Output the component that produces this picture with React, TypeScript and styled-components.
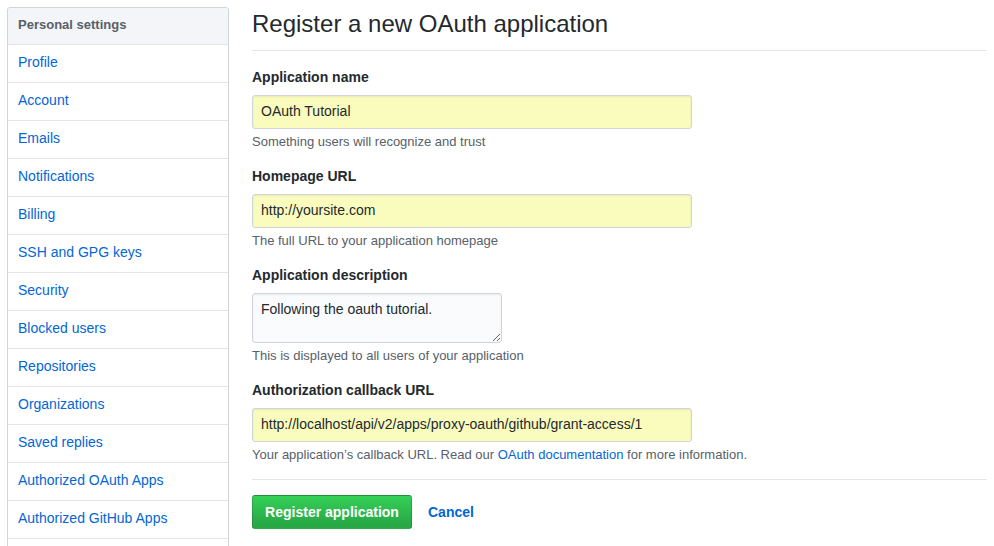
import React from 'react'
import styled, { createGlobalStyle } from 'styled-components'

const GlobalStyle = createGlobalStyle`
  html, body {
    overflow: hidden;
  }
  body {
    margin: 0;
    background: #fff;
    font-family: "Liberation Sans", Arial, sans-serif;
    font-size: 14px;
    line-height: 1.5;
    color: #24292e;
  }
  * { box-sizing: border-box; }
`

const Page = styled.div`
  display: grid;
  grid-template-columns: 222px 1fr;
  column-gap: 23px;
  padding: 7px 7px 0 7px;
  height: 566px;
`

const Menu = styled.nav`
  border: 1px solid #d1d5da;
  border-radius: 3px;
`

const MenuHeading = styled.div`
  height: 37px;
  padding: 0 10px 2px;
  display: flex;
  align-items: center;
  background: #f3f5f8;
  border-bottom: 1px solid #e1e4e8;
  font-size: 13px;
  font-weight: bold;
  color: #586069;
  border-radius: 3px 3px 0 0;
`

const MenuItem = styled.a`
  display: flex;
  align-items: center;
  height: 38px;
  padding: 0 10px 2px;
  border-bottom: 1px solid #e1e4e8;
  color: #0366d6;
  text-decoration: none;
  font-size: 14px;
`

const Main = styled.main`
  min-width: 0;
`

const Subhead = styled.div`
  border-bottom: 1px solid #e1e4e8;
  padding-bottom: 8px;
  margin-bottom: 16px;
`

const Title = styled.h2`
  margin: 0;
  font-size: 24px;
  font-weight: normal;
  line-height: 36px;
  margin-top: -1px;
`

const Group = styled.div`
  margin-bottom: 15px;
`

const Label = styled.label`
  display: block;
  font-weight: bold;
  font-size: 14px;
  line-height: 21px;
  margin-bottom: 7px;
`

const Input = styled.input<{ $filled?: boolean }>`
  display: block;
  width: 440px;
  height: 34px;
  padding: 5px 8px 7px;
  font-family: inherit;
  font-size: 14px;
  color: #24292e;
  background: ${p => (p.$filled ? '#fafcbe' : '#fafbfc')};
  border: 1px solid #d1d5da;
  border-radius: 3px;
  box-shadow: inset 0 1px 2px rgba(27, 31, 35, 0.075);
  outline: none;
`

const TextArea = styled.textarea`
  display: block;
  width: 250px;
  height: 50px;
  padding: 5px 8px;
  font-family: inherit;
  font-size: 14px;
  line-height: 20px;
  color: #24292e;
  background: #fafbfc;
  border: 1px solid #d1d5da;
  border-radius: 3px;
  box-shadow: inset 0 1px 2px rgba(27, 31, 35, 0.075);
  outline: none;
  resize: vertical;
`

const Note = styled.p`
  margin: 4px 0 0;
  font-size: 13px;
  line-height: 18px;
  color: #586069;
`

const Link = styled.a`
  color: #0366d6;
  text-decoration: none;
`

const Divider = styled.hr`
  border: 0;
  border-top: 1px solid #e1e4e8;
  margin: 2px 0 15px;
`

const Actions = styled.div`
  display: flex;
  align-items: center;
  gap: 16px;
`

const PrimaryButton = styled.button`
  height: 34px;
  width: 160px;
  padding: 0 12px;
  font-family: inherit;
  font-size: 14px;
  font-weight: bold;
  color: #fff;
  background-image: linear-gradient(-180deg, #34d058 0%, #28a745 90%);
  border: 1px solid rgba(27, 31, 35, 0.2);
  border-radius: 3px;
  cursor: pointer;
`

const CancelLink = styled.a`
  font-weight: bold;
  color: #0366d6;
  text-decoration: none;
  font-size: 14px;
`

const menuItems = [
  'Profile',
  'Account',
  'Emails',
  'Notifications',
  'Billing',
  'SSH and GPG keys',
  'Security',
  'Blocked users',
  'Repositories',
  'Organizations',
  'Saved replies',
  'Authorized OAuth Apps',
  'Authorized GitHub Apps',
]

export default function App () {
  return (
    <>
      <GlobalStyle />
      <Page>
        <Menu>
          <MenuHeading>Personal settings</MenuHeading>
          {menuItems.map(item => (
            <MenuItem key={item} href='#'>{item}</MenuItem>
          ))}
        </Menu>
        <Main>
          <Subhead>
            <Title>Register a new OAuth application</Title>
          </Subhead>
          <Group>
            <Label>Application name</Label>
            <Input $filled defaultValue='OAuth Tutorial' />
            <Note>Something users will recognize and trust</Note>
          </Group>
          <Group>
            <Label>Homepage URL</Label>
            <Input $filled defaultValue='http://yoursite.com' />
            <Note>The full URL to your application homepage</Note>
          </Group>
          <Group>
            <Label>Application description</Label>
            <TextArea defaultValue='Following the oauth tutorial.' />
            <Note>This is displayed to all users of your application</Note>
          </Group>
          <Group>
            <Label>Authorization callback URL</Label>
            <Input $filled defaultValue='http://localhost/api/v2/apps/proxy-oauth/github/grant-access/1' />
            <Note>
              Your application’s callback URL. Read our <Link href='#'>OAuth documentation</Link> for more information.
            </Note>
          </Group>
          <Divider />
          <Actions>
            <PrimaryButton>Register application</PrimaryButton>
            <CancelLink href='#'>Cancel</CancelLink>
          </Actions>
        </Main>
      </Page>
    </>
  )
}
